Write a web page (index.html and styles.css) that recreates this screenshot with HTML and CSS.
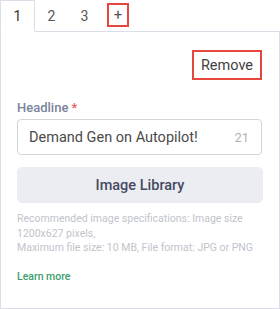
FILE: index.html
```html
<!DOCTYPE html>
<html lang="en">
<head>
  <meta charset="UTF-8">
  <meta name="viewport" content="width=device-width, initial-scale=1.0">
  <title>Ad Variant Editor</title>
  <link rel="stylesheet" href="styles.css">
</head>
<body>
  <!-- Tabs -->
  <div class="tabs">
    <div class="tab active">1</div>
    <div class="tab">2</div>
    <div class="tab">3</div>
    <div class="tab add"><span class="add-btn">+</span></div>
    <div class="tab-fill"></div>
  </div>

  <!-- Panel -->
  <div class="panel">
    <div class="remove-row">
      <button class="remove-btn">Remove</button>
    </div>

    <label class="field-label">Headline <span class="req">*</span></label>
    <div class="input-box">
      <span class="input-text">Demand Gen on Autopilot!</span>
      <span class="counter">21</span>
    </div>

    <button class="library-btn">Image Library</button>

    <p class="hint">
      Recommended image specifications: Image size 1200x627 pixels,<br>
      Maximum file size: 10 MB, File format: JPG or PNG
    </p>

    <a class="learn-more" href="#">Learn more</a>
  </div>
</body>
</html>
```

FILE: styles.css
```css
* {
  margin: 0;
  padding: 0;
  box-sizing: border-box;
}

body {
  width: 280px;
  height: 309px;
  background: #fff;
  font-family: 'Roboto', 'Liberation Sans', sans-serif;
  overflow: hidden;
}

/* Tabs */
.tabs {
  display: flex;
  height: 32px;
}

.tab {
  width: 33px;
  display: flex;
  justify-content: center;
  align-items: center;
  font-size: 14px;
  color: #555;
  border-bottom: 1px solid #dcdde6;
}

.tab.active {
  width: 35px;
  color: #333;
  border: 1px solid #dcdde6;
  border-bottom-color: #fff;
}

.tab.add {
  width: 34px;
}

.add-btn {
  width: 22px;
  height: 24px;
  display: flex;
  justify-content: center;
  align-items: center;
  border: 2px solid #e5473f;
  font-size: 15px;
  color: #555;
  margin-bottom: 1px;
}

.tab-fill {
  flex: 1;
  border-bottom: 1px solid #dcdde6;
}

/* Panel */
.panel {
  height: 277px;
  border: 1px solid #dcdde6;
  border-top: none;
  padding: 18px 16px 0 16px;
}

.remove-row {
  display: flex;
  justify-content: flex-end;
  padding-right: 1px;
}

.remove-btn {
  height: 30px;
  padding: 0 7px;
  border: 2px solid #e5473f;
  background: #fff;
  font-family: inherit;
  font-size: 14.5px;
  color: #3f3f3f;
}

.field-label {
  display: block;
  margin-top: 19px;
  font-size: 13px;
  font-weight: 500;
  line-height: 17px;
  color: #7a849c;
}

.req {
  color: #ec5b5b;
}

.input-box {
  margin-top: 3px;
  height: 36px;
  width: 245px;
  display: flex;
  align-items: center;
  justify-content: space-between;
  padding: 0 12px 0 11px;
  border: 1px solid #d3d5dd;
  border-radius: 4px;
}

.input-text {
  font-size: 14.5px;
  color: #4a4a4a;
}

.counter {
  font-size: 13px;
  color: #b0b2b8;
}

.library-btn {
  display: block;
  margin-top: 12px;
  width: 246px;
  height: 36px;
  border: none;
  border-radius: 5px;
  background: #ecedf3;
  font-family: inherit;
  font-size: 14.5px;
  font-weight: 500;
  color: #454a60;
}

.hint {
  margin-top: 9px;
  font-size: 10.5px;
  line-height: 14.7px;
  color: #c1c3cc;
}

.learn-more {
  display: block;
  margin-top: 14px;
  font-size: 10.5px;
  font-weight: 500;
  color: #3d9c6c;
  text-decoration: none;
}
```
